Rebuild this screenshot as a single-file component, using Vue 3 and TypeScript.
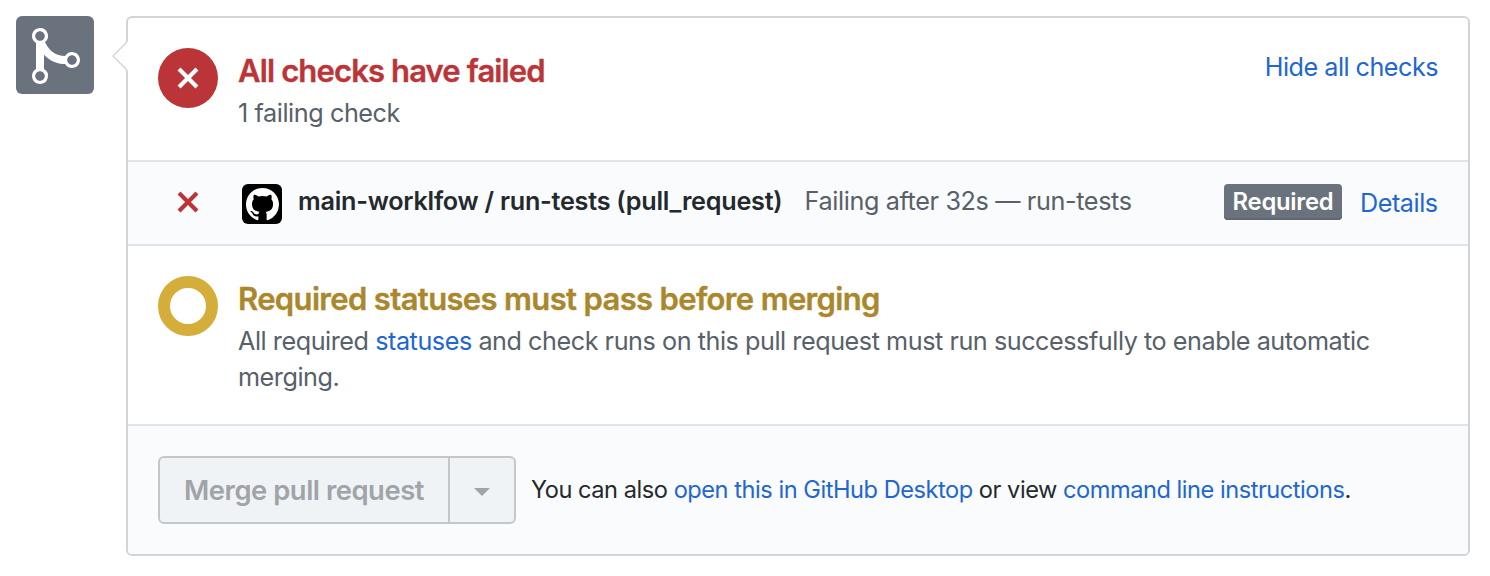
<script setup lang="ts">
const crossPath =
  'M7.48 8l3.75 3.75-1.48 1.48L6 9.48l-3.75 3.75-1.48-1.48L4.52 8 .77 4.25l1.48-1.48L6 6.52l3.75-3.75 1.48 1.48L7.48 8z'
</script>

<template>
  <div class="page">
    <div class="avatar">
      <svg width="48" height="64" viewBox="0 0 12 16" fill="#fff" fill-rule="evenodd">
        <path d="M10 7c-.73 0-1.38.41-1.73 1.02V8C7.22 7.98 6 7.64 5.14 6.98c-.75-.58-1.5-1.61-1.89-2.44A1.993 1.993 0 0 0 2 .99C.89.99 0 1.89 0 3a2 2 0 0 0 1 1.72v6.56c-.59.35-1 .99-1 1.72 0 1.11.89 2 2 2a1.993 1.993 0 0 0 1-3.72V7.67c.67.7 1.44 1.27 2.3 1.69.86.42 2.03.63 2.97.64v-.02c.36.61 1 1.02 1.73 1.02 1.11 0 2-.89 2-2 0-1.11-.89-2-2-2zm-6.8 6c0 .66-.55 1.2-1.2 1.2-.65 0-1.2-.55-1.2-1.2 0-.65.55-1.2 1.2-1.2.65 0 1.2.55 1.2 1.2zm0-10c0 .66-.55 1.2-1.2 1.2C1.35 4.2.8 3.65.8 3c0-.65.55-1.2 1.2-1.2.65 0 1.2.55 1.2 1.2zm8 6c0 .66-.55 1.2-1.2 1.2-.65 0-1.2-.55-1.2-1.2 0-.65.55-1.2 1.2-1.2.65 0 1.2.55 1.2 1.2z" />
      </svg>
    </div>
    <div class="box">
      <svg class="caret" width="16" height="30" viewBox="0 0 16 30">
        <path d="M16 0V30L1 15z" fill="#fff" />
        <path d="M15 1L1 15L15 29" fill="none" stroke="#d1d5da" stroke-width="1.5" />
      </svg>
      <section class="row summary">
        <div class="badge failed">
          <svg width="24" height="32" viewBox="0 0 12 16" fill="#fff"><path :d="crossPath" /></svg>
        </div>
        <div class="copy">
          <h2 class="red">All checks have failed</h2>
          <p class="count">1 failing check</p>
        </div>
        <a class="toggle">Hide all checks</a>
      </section>
      <section class="row check">
        <svg class="cross" width="24" height="32" viewBox="0 0 12 16"><path :d="crossPath" /></svg>
        <div class="app">
          <svg width="33" height="33" viewBox="0 0 16 16" fill="#fff"><path d="M8 0C3.58 0 0 3.58 0 8c0 3.54 2.29 6.53 5.47 7.59.4.07.55-.17.55-.38 0-.19-.01-.82-.01-1.49-2.01.37-2.53-.49-2.69-.94-.09-.23-.48-.94-.82-1.13-.28-.15-.68-.52-.01-.53.63-.01 1.08.58 1.23.82.72 1.21 1.87.87 2.33.66.07-.52.28-.87.51-1.07-1.78-.2-3.64-.89-3.64-3.95 0-.87.31-1.59.82-2.15-.08-.2-.36-1.02.08-2.12 0 0 .67-.21 2.2.82.64-.18 1.32-.27 2-.27.68 0 1.36.09 2 .27 1.53-1.04 2.2-.82 2.2-.82.44 1.1.16 1.92.08 2.12.51.56.82 1.27.82 2.15 0 3.07-1.87 3.75-3.65 3.95.29.25.54.73.54 1.48 0 1.07-.01 1.93-.01 2.2 0 .21.15.46.55.38A8.013 8.013 0 0 0 16 8c0-4.42-3.58-8-8-8z" /></svg>
        </div>
        <strong class="name">main-worklfow / run-tests (pull_request)</strong>
        <span class="result">Failing after 32s — run-tests</span>
        <span class="label">Required</span>
        <a class="details">Details</a>
      </section>
      <section class="row required">
        <div class="badge pending"></div>
        <div class="copy">
          <h2 class="gold">Required statuses must pass before merging</h2>
          <p>All required <a>statuses</a> and check runs on this pull request must run successfully to enable automatic<br />merging.</p>
        </div>
      </section>
      <section class="row merge">
        <div class="group">
          <button class="main" disabled>Merge pull request</button>
          <button class="drop" disabled>
            <svg width="16" height="8" viewBox="0 0 16 8"><path d="M0 0H16L8 8z" fill="#a0a4a8" /></svg>
          </button>
        </div>
        <span class="hint">You can also <a>open this in GitHub Desktop</a> or view <a>command line instructions</a>.</span>
      </section>
    </div>
  </div>
</template>

<style>
body {
  margin: 0;
  background: #fff;
}
</style>

<style scoped>
.page {
  box-sizing: border-box;
  width: 1490px;
  height: 576px;
  padding: 16px 20px 20px 16px;
  display: flex;
  gap: 32px;
  background: #fff;
  font-family: Inter, "Liberation Sans", sans-serif;
  font-size: 25.2px;
  line-height: 36px;
  letter-spacing: -0.515px;
  color: #24292e;
  white-space: nowrap;
}
.avatar {
  flex: none;
  box-sizing: border-box;
  width: 78px;
  height: 78px;
  padding: 8px 0 0 16px;
  border-radius: 6px;
  background: #6a737d;
}
.avatar svg { display: block; }
.box {
  position: relative;
  flex: none;
  box-sizing: border-box;
  width: 1344px;
  height: 540px;
  border: 2px solid #d1d5da;
  border-radius: 6px;
  background: #fff;
}
.caret { position: absolute; left: -16px; top: 23px; }
.row {
  box-sizing: border-box;
  display: flex;
  padding: 0 30px;
  border-bottom: 2px solid #e1e4e8;
}
.summary { height: 144px; padding-top: 30px; }
.badge {
  flex: none;
  box-sizing: border-box;
  width: 60px;
  height: 60px;
  border-radius: 50%;
  display: flex;
  align-items: center;
  justify-content: center;
  margin-right: 20px;
}
.failed { background: #bb3538; }
.pending { border: 12px solid #d4ad3b; }
h2 {
  margin: 0;
  font-size: 31px;
  font-weight: 600;
  line-height: 46px;
  letter-spacing: -0.65px;
  -webkit-text-stroke: 0.35px currentColor;
}
p { margin: 0; padding-top: 1px; color: #586069; letter-spacing: -0.455px; }
.count { letter-spacing: -0.42px; }
.red { color: #bb3538; letter-spacing: -0.86px; }
.gold { color: #ab872c; }
a { color: #2166d1; }
.toggle { margin: 1px 0 0 auto; }
.check { height: 84px; background: #fafbfd; }
.cross { flex: none; margin: 24px 42px 0 18px; fill: #bb3538; }
.app {
  flex: none;
  width: 40px;
  height: 40px;
  margin: 22px 16px 0 0;
  border-radius: 6px;
  background: #000;
  display: flex;
  align-items: center;
  justify-content: center;
}
.name { font-weight: 600; margin-top: 21px; letter-spacing: -0.24px; }
.result { margin: 21px 0 0 22px; color: #586069; letter-spacing: -0.36px; }
.label {
  box-sizing: border-box;
  margin: 22px 18px 0 auto;
  width: 118px;
  height: 36px;
  border-radius: 4px;
  background: #6a737d;
  box-shadow: inset 0 -2px 0 #5f6871;
  color: #fff;
  font-weight: 600;
  text-align: center;
  font-size: 23.8px;
  letter-spacing: -0.25px;
}
.details { width: 78px; margin-top: 23px; letter-spacing: -0.45px; }
.required { height: 180px; padding-top: 30px; }
.merge {
  height: 128px;
  padding-top: 30px;
  border-bottom: 0;
  background: #fafbfd;
  border-radius: 0 0 4px 4px;
}
.group {
  flex: none;
  box-sizing: border-box;
  display: flex;
  width: 358px;
  height: 68px;
  border: 2px solid #c3c7ca;
  border-radius: 6px;
  background: #eff3f6;
  overflow: hidden;
}
button {
  border: 0;
  background: none;
  padding: 0;
  font: inherit;
  color: #a0a4a8;
}
.main {
  flex: none;
  box-sizing: border-box;
  width: 290px;
  font-size: 27.4px;
  font-weight: 600;
  letter-spacing: -0.47px;
  border-right: 2px solid #c3c7ca;
}
.drop {
  flex: 1;
  padding-top: 4px;
  display: flex;
  align-items: center;
  justify-content: center;
}
.hint { margin: 16px 0 0 15px; font-size: 23.6px; letter-spacing: -0.465px; }
</style>
